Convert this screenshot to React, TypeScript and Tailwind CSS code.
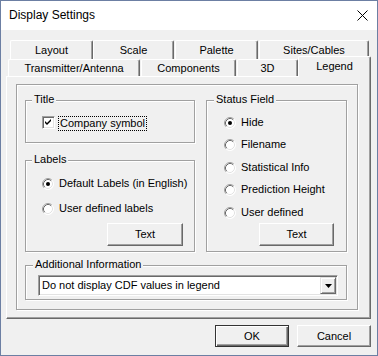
import React from 'react';

const Radio = ({ checked }: { checked?: boolean }) => (
  <svg width="12" height="12" viewBox="0 0 12 12" className="shrink-0">
    <circle cx="6" cy="6" r="5.5" fill="#fff" />
    <path d="M2.11 9.89A5.5 5.5 0 0 1 9.89 2.11" fill="none" stroke="#a0a0a0" />
    <path d="M9.89 2.11A5.5 5.5 0 0 1 2.11 9.89" fill="none" stroke="#fff" />
    <path d="M2.82 9.18A4.5 4.5 0 0 1 9.18 2.82" fill="none" stroke="#696969" />
    <path d="M9.18 2.82A4.5 4.5 0 0 1 2.82 9.18" fill="none" stroke="#e3e3e3" />
    {checked && <circle cx="6" cy="6" r="2" fill="#000" />}
  </svg>
);

const RadioRow = ({ label, checked, className }: { label: string; checked?: boolean; className: string }) => (
  <div className={`flex items-center h-[13px] gap-[5px] leading-[13px] ${className}`}>
    <Radio checked={checked} />
    <span>{label}</span>
  </div>
);

const Group = ({
  label,
  className,
  legendClass = 'ml-[6px]',
  children,
}: {
  label: string;
  className: string;
  legendClass?: string;
  children?: React.ReactNode;
}) => (
  <div className={`flex flex-col shrink-0 border border-[#a0a0a0] shadow-[inset_1px_1px_0_#fff,1px_1px_0_#fff] ${className}`}>
    <span className={`self-start -mt-[8px] px-[2px] bg-[#f0f0f0] leading-[13px] ${legendClass}`}>{label}</span>
    {children}
  </div>
);

const Button = ({ label, className }: { label: string; className: string }) => (
  <div
    className={`flex items-center justify-center shrink-0 bg-[#f0f0f0] border border-t-white border-l-white border-r-[#696969] border-b-[#696969] shadow-[inset_-1px_-1px_0_#a0a0a0] leading-[13px] ${className}`}
  >
    {label}
  </div>
);

const Tab = ({ label, className }: { label: string; className: string }) => (
  <div
    className={`shrink-0 text-center leading-[13px] border-t border-l border-r border-t-white border-l-white border-r-[#696969] shadow-[inset_-1px_0_0_#a0a0a0] rounded-t-[2px] ${className}`}
  >
    {label}
  </div>
);

export default function App() {
  return (
    <div className="w-[378px] h-[356px] flex flex-col border border-[#6c7fa3] bg-[#f0f0f0] text-[11px] text-black font-['Liberation_Sans',Arial,sans-serif] overflow-hidden">
      {/* title bar */}
      <div className="h-[29px] shrink-0 bg-white flex items-center justify-between pl-[8px] pr-[9px]">
        <span className="text-[12px] leading-[29px]">Display Settings</span>
        <svg width="11" height="11" viewBox="0 0 11 11">
          <path d="M0.5 0.5L10.5 10.5M10.5 0.5L0.5 10.5" stroke="#000" strokeWidth="1" />
        </svg>
      </div>

      <div className="flex flex-col pt-[10px]">
        {/* back row of tabs */}
        <div className="flex h-[19px]">
          <Tab label="Layout" className="ml-[9px] w-[83px] pt-[3px]" />
          <Tab label="Scale" className="w-[81px] pt-[3px]" />
          <Tab label="Palette" className="ml-[1px] w-[83px] pt-[3px]" />
          <Tab label="Sites/Cables" className="ml-[1px] w-[110px] pt-[3px]" />
        </div>
        {/* front row of tabs */}
        <div className="flex items-end h-[21px] -mt-[3px]">
          <Tab label="Transmitter/Antenna" className="ml-[7px] w-[132px] h-[18px] pt-[2px]" />
          <Tab label="Components" className="ml-[1px] w-[95px] h-[18px] pt-[2px]" />
          <Tab label="3D" className="ml-[1px] w-[61px] h-[18px] pt-[2px]" />
          <Tab label="Legend" className="w-[73px] h-[21px] pt-[3px] relative z-10 bg-[#f0f0f0]" />
        </div>

        {/* tab page */}
        <div className="-mt-[1px] ml-[5px] w-[365px] h-[243px] flex flex-col border border-t-white border-l-white border-r-[#696969] border-b-[#696969] shadow-[inset_-1px_-1px_0_#a0a0a0]">
          <div className="ml-[9px] mt-[7px] w-[342px] h-[226px] flex flex-col pt-[15px] pl-[8px] border border-[#a0a0a0] shadow-[inset_1px_1px_0_#fff,1px_1px_0_#fff]">
            <div className="flex gap-[11px]">
              <div className="flex flex-col gap-[17px] w-[170px]">
                <Group label="Title" className="h-[43px]">
                  <div className="flex items-start mt-[10px] ml-[16px]">
                    <span className="w-[13px] h-[13px] flex items-center justify-center bg-white border border-t-[#a0a0a0] border-l-[#a0a0a0] border-r-white border-b-white shadow-[inset_1px_1px_0_#696969,inset_-1px_-1px_0_#e3e3e3]">
                      <svg width="7" height="7" viewBox="0 0 7 7">
                        <path d="M0 2L2 4L6 0L6 2L2 6L0 4Z" fill="#000" />
                      </svg>
                    </span>
                    <span className="ml-[3px] px-[1px] leading-[13px] border border-dotted border-black">Company symbol</span>
                  </div>
                </Group>
                <Group label="Labels" className="h-[92px]">
                  <RadioRow label="Default Labels (in English)" checked className="mt-[11px] ml-[16px]" />
                  <RadioRow label="User defined labels" className="mt-[12px] ml-[16px]" />
                  <Button label="Text" className="self-end mt-[8px] mr-[11px] w-[76px] h-[23px]" />
                </Group>
              </div>
              <Group label="Status Field" legendClass="ml-[7px]" className="w-[141px] h-[152px]">
                <RadioRow label="Hide" checked className="mt-[10px] ml-[17px]" />
                <RadioRow label="Filename" className="mt-[9px] ml-[17px]" />
                <RadioRow label="Statistical Info" className="mt-[10px] ml-[17px]" />
                <RadioRow label="Prediction Height" className="mt-[9px] ml-[17px]" />
                <RadioRow label="User defined" className="mt-[10px] ml-[17px]" />
                <Button label="Text" className="self-end mt-[4px] mr-[12px] w-[75px] h-[23px]" />
              </Group>
            </div>

            <Group label="Additional Information" legendClass="ml-[7px]" className="mt-[13px] w-[322px] h-[35px]">
              <div className="mt-[4px] ml-[12px] w-[300px] h-[21px] flex items-center justify-between bg-white border border-t-[#a0a0a0] border-l-[#a0a0a0] border-r-white border-b-white shadow-[inset_1px_1px_0_#696969,inset_-1px_-1px_0_#e3e3e3] pl-[3px] pr-[1px]">
                <span className="leading-[13px]">Do not display CDF values in legend</span>
                <div className="w-[16px] h-[17px] flex items-center justify-center bg-[#f0f0f0] border border-t-[#e3e3e3] border-l-[#e3e3e3] border-r-[#696969] border-b-[#696969] shadow-[inset_1px_1px_0_#fff,inset_-1px_-1px_0_#a0a0a0]">
                  <svg width="7" height="4" viewBox="0 0 7 4">
                    <path d="M0 0H7L3.5 4Z" fill="#000" />
                  </svg>
                </div>
              </div>
            </Group>
          </div>
        </div>

        {/* dialog buttons */}
        <div className="flex justify-end gap-[8px] mt-[6px] pr-[6px]">
          <div className="w-[74px] h-[22px] flex items-center justify-center leading-[13px] border border-[#333] shadow-[inset_1px_1px_0_#fff,inset_-1px_-1px_0_#696969,inset_-2px_-2px_0_#a0a0a0]">
            OK
          </div>
          <Button label="Cancel" className="w-[74px] h-[22px]" />
        </div>
      </div>
    </div>
  );
}
